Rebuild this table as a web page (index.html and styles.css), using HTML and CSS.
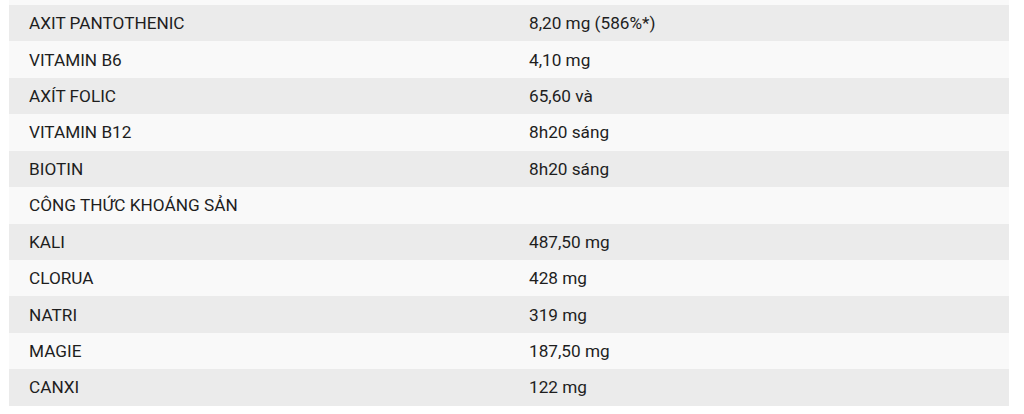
FILE: index.html
```html
<!DOCTYPE html>
<html lang="vi">
<head>
<meta charset="utf-8">
<link rel="stylesheet" href="styles.css">
</head>
<body>
<div class="wrap">
<table class="facts">
<tbody>
<tr class="cut"><td></td><td></td></tr>
<tr><td>AXIT PANTOTHENIC</td><td>8,20 mg (586%*)</td></tr>
<tr><td>VITAMIN B6</td><td>4,10 mg</td></tr>
<tr><td>AXÍT FOLIC</td><td>65,60 và</td></tr>
<tr><td>VITAMIN B12</td><td>8h20 sáng</td></tr>
<tr><td>BIOTIN</td><td>8h20 sáng</td></tr>
<tr><td>CÔNG THỨC KHOÁNG SẢN</td><td></td></tr>
<tr><td>KALI</td><td>487,50 mg</td></tr>
<tr><td>CLORUA</td><td>428 mg</td></tr>
<tr><td>NATRI</td><td>319 mg</td></tr>
<tr><td>MAGIE</td><td>187,50 mg</td></tr>
<tr><td>CANXI</td><td>122 mg</td></tr>
</tbody>
</table>
</div>
</body>
</html>
```
FILE: styles.css
```css
html, body {
  margin: 0;
  padding: 0;
  background: #ffffff;
}
.wrap {
  padding: 0 15px 0 9px;
}
.facts {
  width: 1000px;
  border-collapse: collapse;
  table-layout: fixed;
  font-family: Roboto, "Noto Sans", sans-serif;
  font-size: 17.2px;
  color: #1e1e1e;
}
.facts td {
  width: 50%;
  height: 36.43px;
  padding: 0 20px;
  box-sizing: border-box;
  line-height: 20px;
  vertical-align: middle;
}
.facts tr:nth-child(odd) td {
  background: #f9f9f9;
}
.facts tr:nth-child(even) td {
  background: #ebebeb;
}
.facts tr.cut td {
  height: 5px;
  padding: 0;
}
```
